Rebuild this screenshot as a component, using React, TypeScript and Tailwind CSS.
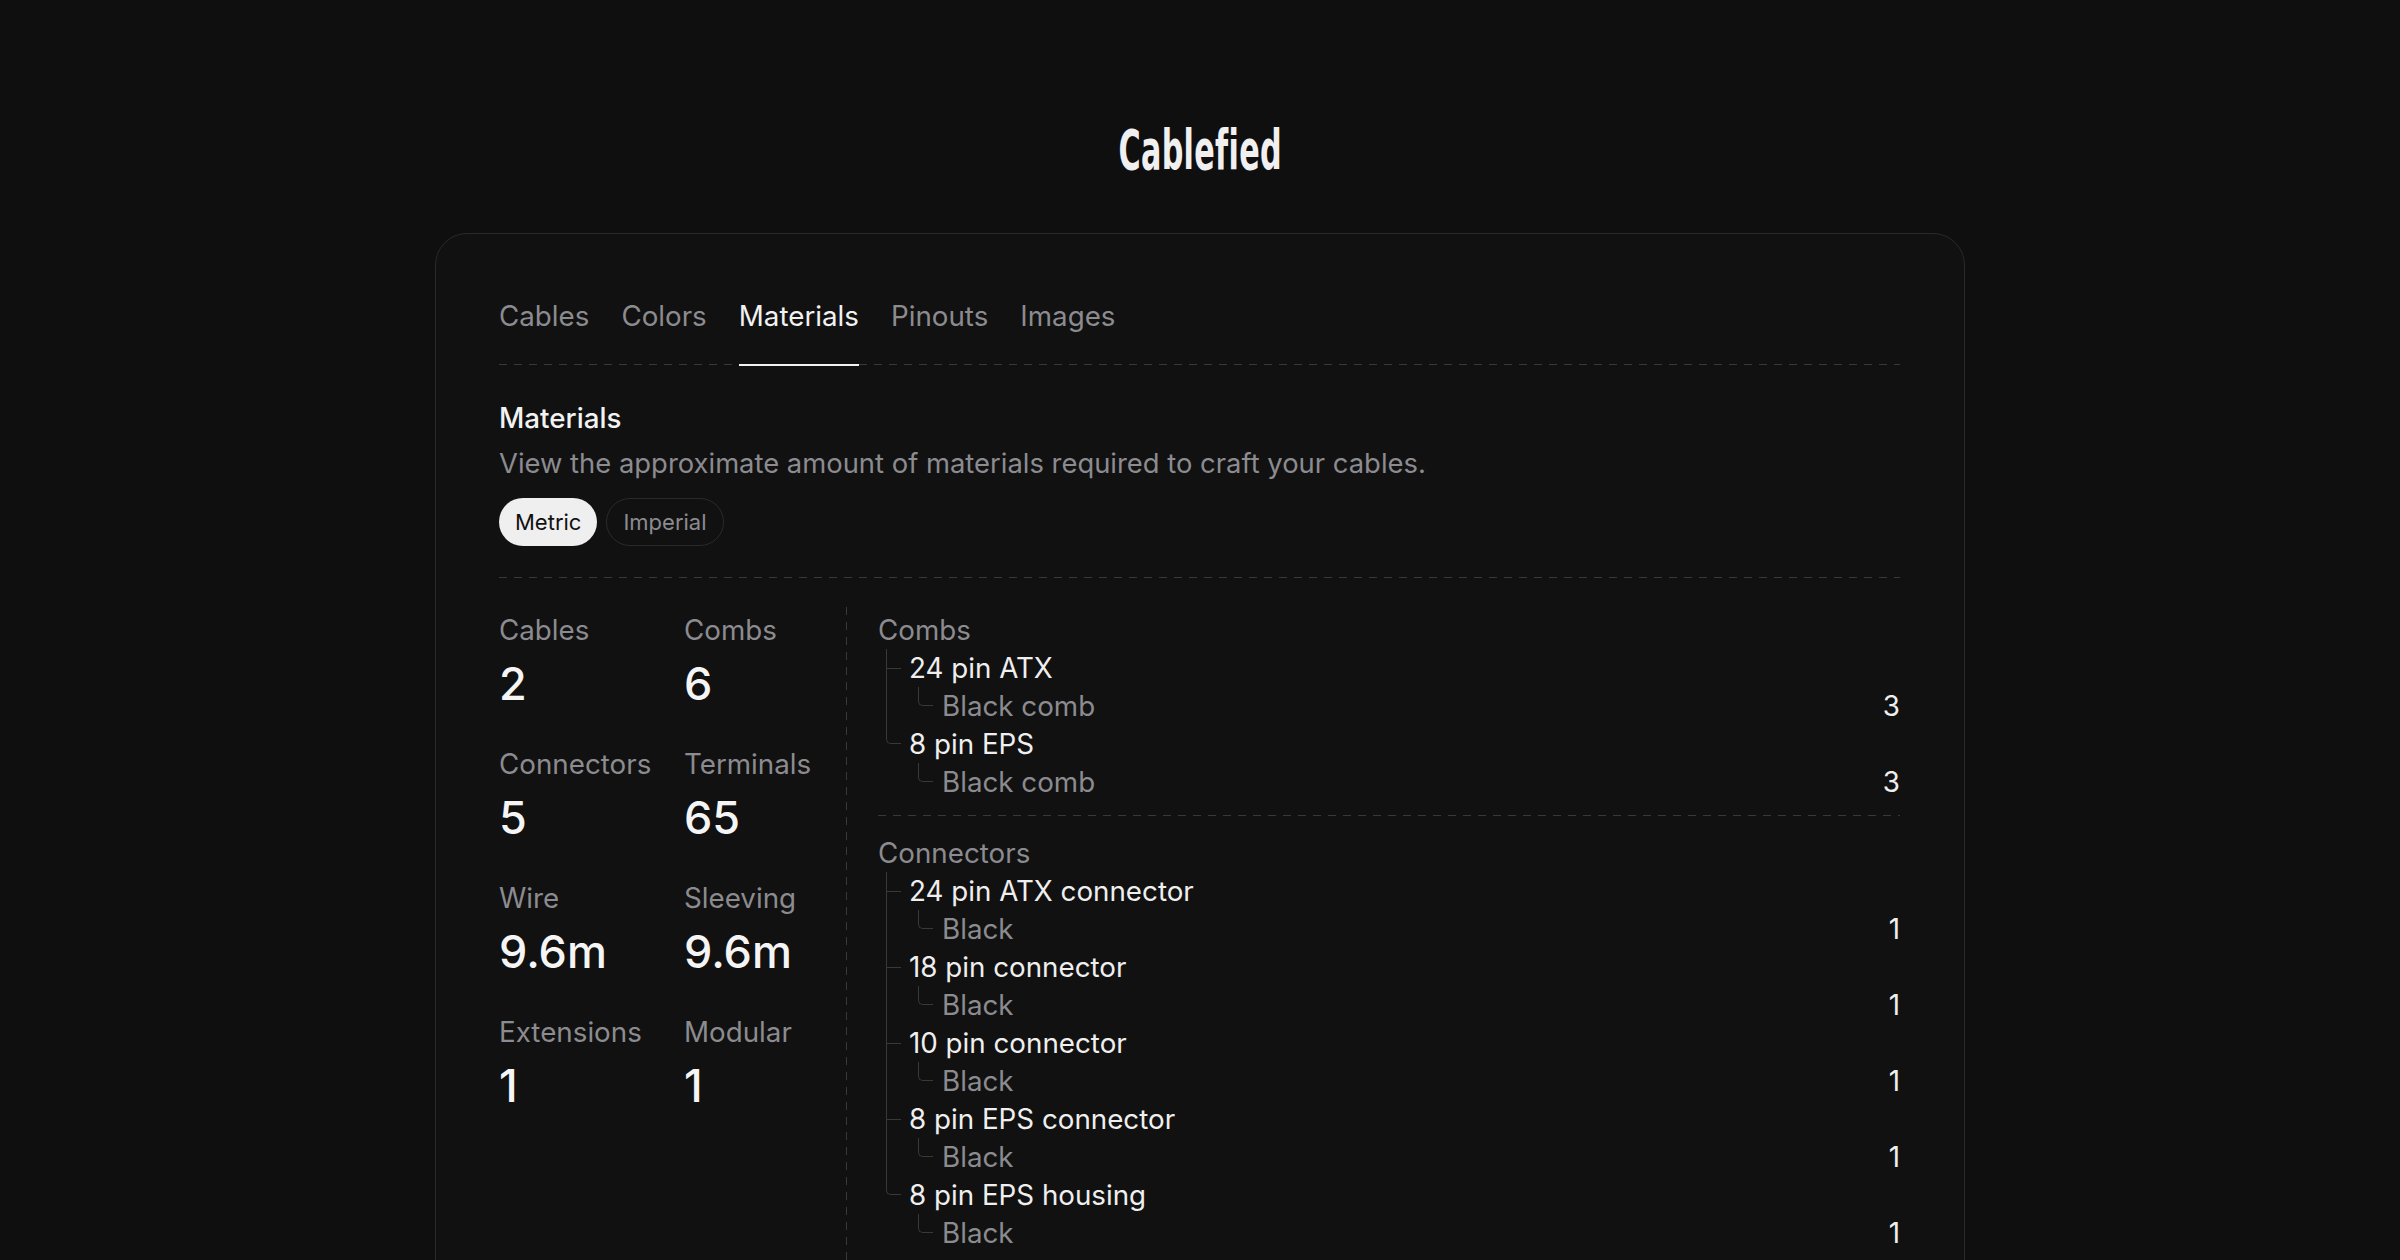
import React from "react";

const dashH =
  "h-px bg-[repeating-linear-gradient(to_right,#393939_0px,#393939_8px,transparent_8px,transparent_15px)]";
const dashV =
  "w-px bg-[repeating-linear-gradient(to_bottom,#393939_0px,#393939_8px,transparent_8px,transparent_15px)]";

type Leaf = { name: string; count: number };
type Item = { name: string; leaves: Leaf[] };
type Section = { title: string; items: Item[] };

const sections: Section[] = [
  {
    title: "Combs",
    items: [
      { name: "24 pin ATX", leaves: [{ name: "Black comb", count: 3 }] },
      { name: "8 pin EPS", leaves: [{ name: "Black comb", count: 3 }] },
    ],
  },
  {
    title: "Connectors",
    items: [
      { name: "24 pin ATX connector", leaves: [{ name: "Black", count: 1 }] },
      { name: "18 pin connector", leaves: [{ name: "Black", count: 1 }] },
      { name: "10 pin connector", leaves: [{ name: "Black", count: 1 }] },
      { name: "8 pin EPS connector", leaves: [{ name: "Black", count: 1 }] },
      { name: "8 pin EPS housing", leaves: [{ name: "Black", count: 1 }] },
    ],
  },
  {
    title: "Terminals",
    items: [
      { name: "Female terminal", leaves: [{ name: "Standard", count: 65 }] },
    ],
  },
];

const stats = [
  ["Cables", "2"],
  ["Combs", "6"],
  ["Connectors", "5"],
  ["Terminals", "65"],
  ["Wire", "9.6m"],
  ["Sleeving", "9.6m"],
  ["Extensions", "1"],
  ["Modular", "1"],
];

function TreeSection({ section }: { section: Section }) {
  return (
    <div>
      <div className="h-[38px] leading-[38px] text-[#8b8b90]">{section.title}</div>
      <div className="ml-[8px]">
        {section.items.map((item, i) => {
          const last = i === section.items.length - 1;
          return (
            <div key={i} className="relative pl-[23px]">
              {last ? (
                <span className="absolute left-0 top-0 h-[19px] w-[15px] border-l border-b border-[#393939] rounded-bl-[5px]" />
              ) : (
                <>
                  <span className="absolute left-0 top-0 bottom-0 w-px bg-[#393939]" />
                  <span className="absolute left-0 top-[19px] w-[15px] h-px bg-[#393939]" />
                </>
              )}
              <div className="h-[38px] leading-[38px] text-[#efefef]">{item.name}</div>
              {item.leaves.map((leaf, j) => (
                <div key={j} className="relative ml-[9px] pl-[24px] flex justify-between h-[38px] leading-[38px]">
                  <span className="absolute left-0 top-0 h-[19px] w-[15px] border-l border-b border-[#393939] rounded-bl-[5px]" />
                  <span className="text-[#8b8b90]">{leaf.name}</span>
                  <span className="text-[#efefef]">{leaf.count}</span>
                </div>
              ))}
            </div>
          );
        })}
      </div>
    </div>
  );
}

export default function App() {
  const tabs = ["Cables", "Colors", "Materials", "Pinouts", "Images"];
  return (
    <div
      className="min-h-screen bg-[#0f0f0f] text-[#efefef] pb-[200px]"
      style={{ fontFamily: "Inter, 'Noto Sans', sans-serif" }}
    >
      <div className="pt-[123px] flex justify-center">
        <h1
          className="text-[56px] leading-[54px] font-bold text-[#f0f0f0] scale-x-[0.6] tracking-[0.5px]"
          style={{ fontFamily: "'DejaVu Sans Condensed', 'DejaVu Sans', sans-serif", fontStretch: "condensed" }}
        >
          Cablefied
        </h1>
      </div>

      <div className="mx-auto mt-[56px] w-[1530px] rounded-[32px] border border-[#2a2a2a] bg-[#111111] pl-[63px] pr-[64px] pt-[61px] pb-[80px] text-[27.75px]">
        {/* Tabs */}
        <div className="flex gap-[32px]">
          {tabs.map((t) => {
            const active = t === "Materials";
            return (
              <div key={t} className="relative pb-[27px]">
                <span className={"block leading-[42px] " + (active ? "text-[#f2f2f2]" : "text-[#8b8b90]")}>{t}</span>
                {active && <span className="absolute left-0 right-0 bottom-[-2px] h-[2px] bg-[#f2f2f2]" />}
              </div>
            );
          })}
        </div>
        <div className={dashH} />

        {/* Header */}
        <div className="mt-[32px] leading-[42px] font-medium text-[#f2f2f2]">Materials</div>
        <div className="mt-[3px] leading-[42px] text-[27.4px] text-[#8b8b90]">
          View the approximate amount of materials required to craft your cables.
        </div>
        <div className="mt-[14px] flex gap-[9px]">
          <button className="h-[48px] px-[16px] rounded-full bg-[#efefef] text-[#111111] text-[22px] leading-none">
            Metric
          </button>
          <button className="h-[48px] px-[16px] rounded-full border border-[#2a2a2a] text-[#8b8b90] text-[22px] leading-none">
            Imperial
          </button>
        </div>
        <div className={"mt-[31px] " + dashH} />

        {/* Body */}
        <div className="flex pt-[29px]">
          <div className="mt-[2px] w-[347px] shrink-0 grid grid-cols-[185px_1fr] gap-y-[32px] content-start">
            {stats.map(([label, value]) => (
              <div key={label}>
                <div className="leading-[42px] text-[#8b8b90]">{label}</div>
                <div className="mt-[6px] text-[45px] leading-[54px] font-medium text-[#f5f5f5]">{value}</div>
              </div>
            ))}
          </div>
          <div className={"self-stretch " + dashV} />
          <div className="flex-1 pl-[31px] pt-[4px]">
            {sections.map((s, i) => (
              <div key={s.title}>
                {i > 0 && <div className={"mt-[14px] mb-[18px] " + dashH} />}
                <TreeSection section={s} />
              </div>
            ))}
          </div>
        </div>
      </div>
    </div>
  );
}
